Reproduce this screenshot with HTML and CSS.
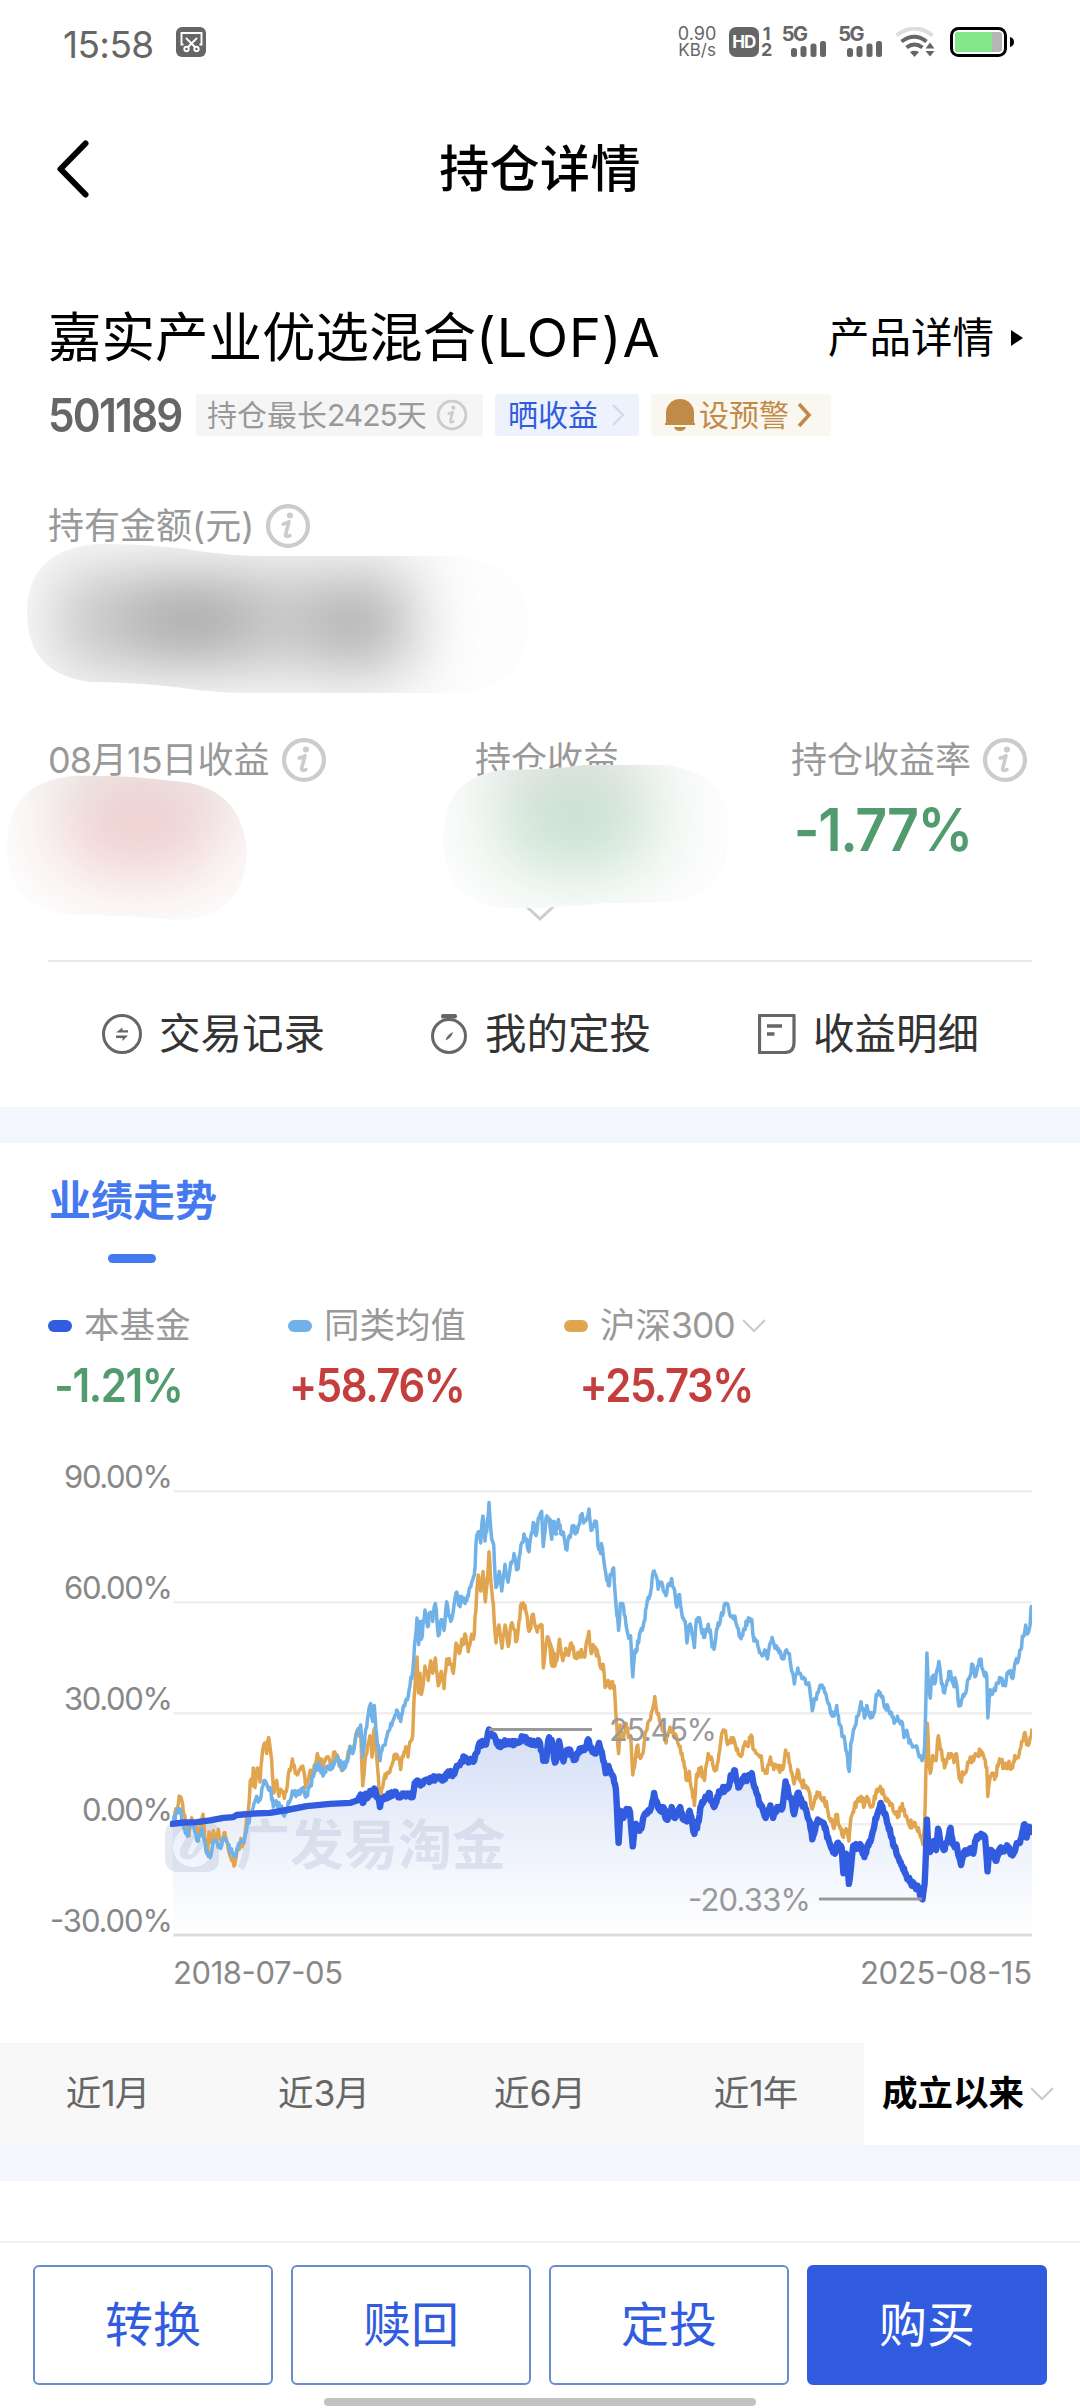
FILE: index.html
```html
<!DOCTYPE html>
<html lang="zh-CN">
<head>
<meta charset="UTF-8">
<meta name="viewport" content="width=device-width, initial-scale=1.0">
<title>持仓详情</title>
<link rel="stylesheet" href="styles.css">
</head>
<body>
<svg width="0" height="0" class="defs">
    <symbol id="info" viewBox="0 0 48 48">
        <circle cx="24" cy="24" r="20.8" fill="none" stroke="currentColor" stroke-width="4.400"/>
        <circle cx="26" cy="13" r="3.200" fill="currentColor"/>
        <path d="M19 22q4-1 6-2.500l-3.500 13.500q-.5 3 4.500 1" fill="none" stroke="currentColor" stroke-width="3.800" stroke-linejoin="round" stroke-linecap="round"/>
    </symbol>
    <symbol id="signal" viewBox="0 0 36 16">
        <rect x="0" y="7" width="6" height="9" rx="2.500"/>
        <rect x="9.500" y="5" width="6" height="11" rx="2.500"/>
        <rect x="19.500" y="2.500" width="6" height="13.500" rx="2.500"/>
        <rect x="29" y="0" width="6" height="16" rx="2.500"/>
    </symbol>
</svg>
<div class="main">
    <div class="status">
        <span class="time">15:58</span>
        <svg class="cut" width="30" height="30" viewBox="0 0 30 30">
            <rect width="30" height="30" rx="6" fill="#666"/>
            <g fill="none" stroke="#fff" stroke-width="1.900">
                <path d="M7.500 17.500H5.500V6h20v11.500h-2"/>
                <path d="M10.500 11.500l8.500 8.500M20.500 11.500L12 20" stroke-linecap="round"/>
                <circle cx="10.500" cy="22" r="2.200"/>
                <circle cx="20.500" cy="22" r="2.200"/>
            </g>
        </svg>
        <div class="speed"><span>0.90</span><span>KB/s</span></div>
        <div class="hd">HD</div>
        <div class="sims"><span>1</span><span>2</span></div>
        <div class="cell"><span>5G</span><svg width="36" height="16"><use href="#signal"/></svg></div>
        <div class="cell"><span>5G</span><svg width="36" height="16"><use href="#signal"/></svg></div>
        <svg class="wifi" width="40" height="30" viewBox="0 0 40 30">
            <g fill="none" stroke="#666" stroke-width="4">
                <path d="M1.500 8.500Q19.500-5.500 37.500 8.500" stroke="#ddd"/>
                <path d="M6.500 14.500q13-9.500 25 0"/>
                <path d="M11.500 20.500q8-6 16 0" />
            </g>
            <path d="M15 25q4.500-2.500 9 0l-4.500 5z" fill="#666"/>
            <path d="M30.500 21.500l4.500-6 4.500 6zM30.500 24h9l-4.500 5.500z" fill="#666"/>
        </svg>
        <svg width="66" height="30" viewBox="0 0 66 30">
            <rect x="1.500" y="1.500" width="54" height="27" rx="7" fill="#fff" stroke="#000" stroke-width="3"/>
            <rect x="5" y="5" width="47" height="20" rx="3" fill="#b5b5b5"/>
            <path d="M8 5h34v20H8q-3 0-3-3V8q0-3 3-3z" fill="#84e88b"/>
            <path d="M60 10q4 1 4 5t-4 5z"/>
        </svg>
    </div>

    <header class="nav">
        <svg width="34" height="60" viewBox="0 0 34 60"><path d="M29.500 4.500L4.500 30l25 25.500" fill="none" stroke="#000" stroke-width="6" stroke-linecap="round" stroke-linejoin="round"/></svg>
        <h1>持仓详情</h1>
    </header>

    <section class="fund">
        <div class="fund_title">
            <h2>嘉实产业优选混合<span>(LOF)A</span></h2>
            <a class="detail">产品详情<svg width="12" height="16" viewBox="0 0 12 16"><path d="M0 0l12 8-12 8z"/></svg></a>
        </div>
        <div class="tags">
            <div class="code"><span>501189</span></div>
            <span class="tag tag_days">持仓最长<i>2425</i>天<svg width="32" height="32"><use href="#info"/></svg></span>
            <span class="tag tag_share">晒收益<svg width="14" height="24" viewBox="0 0 14 24"><path d="M2 2l10 10L2 22" fill="none" stroke="#d0d7e6" stroke-width="2"/></svg></span>
            <span class="tag tag_alert"><svg width="30" height="34" viewBox="0 0 30 34"><path d="M1 26V15a14 14 0 0 1 28 0v11z"/><path d="M0 25h30v2H0zM9 29h12q-1 4-6 4t-6-4z"/></svg>设预警<svg class="go" width="15" height="26" viewBox="0 0 15 26"><path d="M2 2l10 11L2 24" fill="none" stroke="#bf8b46" stroke-width="3.600"/></svg></span>
        </div>

        <div class="label amount">持有金额(元)<svg width="46" height="46"><use href="#info"/></svg></div>

        <div class="profits">
            <div class="profit">
                <div class="label"><i>08</i>月<i>15</i>日收益<svg width="46" height="46"><use href="#info"/></svg></div>
            </div>
            <div class="profit">
                <div class="label">持仓收益</div>
            </div>
            <div class="profit">
                <div class="label">持仓收益率<svg width="46" height="46"><use href="#info"/></svg></div>
                <div class="rate">-1.77%</div>
            </div>
        </div>
        <div class="more"><svg width="32" height="17" viewBox="0 0 32 17"><path d="M2 1l14 13L30 1" fill="none" stroke="#ccc" stroke-width="3"/></svg></div>

        <!-- smudges that hide the private amounts -->
        <svg class="smudge" width="760" height="400" viewBox="0 530 760 400">
            <defs>
                <filter id="soft" x="-50%" y="-80%" width="200%" height="260%"><feGaussianBlur stdDeviation="32"/></filter>
                <filter id="softer" x="-80%" y="-120%" width="260%" height="340%"><feGaussianBlur stdDeviation="34"/></filter>
                <clipPath id="c1"><path d="M95 544q58-1 110 8 30 4 60 4H450q78 6 78 68 0 69-78 69H250q-35 0-75-6-45-5-85-5-63-8-63-69 0-62 68-69z"/></clipPath>
                <clipPath id="c2"><path d="M72 776q58-1 100 5 68 3 75 68 0 70-72 71-50-5-100-5-68-4-68-69 0-64 65-70z"/></clipPath>
                <clipPath id="c3"><path d="M505 770q45 0 80-5h78q66 5 66 69 0 63-66 69h-60q-45 6-98 5-62-4-62-69 0-64 62-69z"/></clipPath>
            </defs>
            <g clip-path="url(#c1)">
                <rect y="530" width="560" height="180" fill="#fdfdfd"/>
                <g filter="url(#soft)"><rect x="50" y="565" width="365" height="110" fill="#cbcbcb"/><ellipse cx="190" cy="620" rx="70" ry="32" fill="#a2a2a2"/><ellipse cx="355" cy="626" rx="46" ry="30" fill="#a6a6a6"/></g>
            </g>
            <g clip-path="url(#c2)">
                <rect y="750" width="300" height="180" fill="#fdfcfc"/>
                <g filter="url(#softer)"><rect x="50" y="740" width="210" height="50" fill="#e4e0e0"/><ellipse cx="140" cy="830" rx="90" ry="48" fill="#f0cfcf"/></g>
            </g>
            <g clip-path="url(#c3)">
                <rect x="430" y="750" width="310" height="180" fill="#fcfdfc"/>
                <g filter="url(#softer)"><rect x="490" y="730" width="160" height="54" fill="#dcdfdd"/><ellipse cx="575" cy="826" rx="86" ry="50" fill="#cae2d1"/></g>
            </g>
        </svg>

        <div class="actions">
            <a class="action">
                <svg width="40" height="40" viewBox="0 0 40 40"><circle cx="20" cy="20" r="18.500" fill="none" stroke="#666" stroke-width="3"/><path d="M14 18.500l6.500-5v2.700H26v2.300zM26 21.500l-5.500 5.500v-3H14v-2.500z" fill="#666"/></svg>交易记录
            </a>
            <a class="action">
                <svg width="38" height="40" viewBox="0 0 38 40"><circle cx="19" cy="22" r="16.500" fill="none" stroke="#666" stroke-width="3"/><rect x="11" y="0" width="16" height="4.500" rx="2" fill="#666"/><path d="M23 18q-1.500 6-7.500 8.500Q17 20.500 23 18z" fill="#666"/></svg>我的定投
            </a>
            <a class="action">
                <svg width="38" height="40" viewBox="0 0 38 40"><path d="M1.500 1.500h34.500V29q0 9.500-9.500 9.500H1.500z" fill="none" stroke="#666" stroke-width="3.200" stroke-linejoin="round"/><path d="M9 12h15M9 20h7.500" stroke="#666" stroke-width="3.600"/></svg>收益明细
            </a>
        </div>
    </section>

    <section class="trend">
        <h3>业绩走势</h3>
        <div class="legend">
            <div class="item">
                <div class="name"><b class="dot dot_fund"></b>本基金</div>
                <div class="value down">-1.21%</div>
            </div>
            <div class="item">
                <div class="name"><b class="dot dot_avg"></b>同类均值</div>
                <div class="value">+58.76%</div>
            </div>
            <div class="item">
                <div class="name"><b class="dot dot_index"></b>沪深<i>300</i><svg width="24" height="14" viewBox="0 0 24 14"><path d="M1 1l11 11L23 1" fill="none" stroke="#c8c8d8" stroke-width="2"/></svg></div>
                <div class="value">+25.73%</div>
            </div>
        </div>

        <svg class="chart" width="1080" height="560" viewBox="0 0 1080 560">
            <defs>
                <linearGradient id="fade" gradientUnits="userSpaceOnUse" x1="0" y1="280" x2="0" y2="485">
                    <stop offset="0" stop-color="#d4def5"/>
                    <stop offset=".5" stop-color="#ebf0fb"/>
                    <stop offset="1" stop-color="#fff"/>
                </linearGradient>
                <clipPath id="plot"><rect x="170" y="30" width="862" height="460"/></clipPath>
            </defs>
            <path id="area" fill="url(#fade)" clip-path="url(#plot)"/>
            <g class="grid">
                <path d="M173.500 41.200H1032M173.500 152.200H1032M173.500 263.200H1032M173.500 374.200H1032"/>
                <path class="axis" d="M173.500 485H1032"/>
            </g>
            <g class="mark">
                <path fill-rule="evenodd" d="M179 371h26q14 0 14 14v23q0 14-14 14h-26q-14 0-14-14v-23q0-14 14-14zM193 377a20 20 0 1 0 .1 0z"/>
                <path d="M188 384h8l-8 18q0 4 4 2l8-14h10l-2 4h-4q-8 17-19 15-9-2-3-14z"/>
                <text x="236" y="415" textLength="270">广发易淘金</text>
            </g>
            <g clip-path="url(#plot)" fill="none" stroke-linejoin="round">
                <path id="index" stroke="#e1a54f" stroke-width="3.500"/>
                <path id="avg" stroke="#70b1e8" stroke-width="3.500"/>
                <path id="fund" stroke="#315ce0" stroke-width="6.400" stroke-linecap="round"/>
            </g>
            <g class="ticks">
                <text x="64" y="38" textLength="109">90.00%</text>
                <text x="64" y="149" textLength="109">60.00%</text>
                <text x="64" y="260" textLength="109">30.00%</text>
                <text x="82" y="371" textLength="91">0.00%</text>
                <text x="50" y="482" textLength="123">-30.00%</text>
                <text x="173" y="534" textLength="170">2018-07-05</text>
                <text x="860" y="534" textLength="172">2025-08-15</text>
            </g>
            <g class="peaks">
                <path d="M489 279.600H592M819 449H922"/>
                <text x="609" y="291" textLength="108">25.45%</text>
                <text x="688" y="461" textLength="123">-20.33%</text>
            </g>
        </svg>

        <div class="tabs">
            <span>近<i>1</i>月</span>
            <span>近<i>3</i>月</span>
            <span>近<i>6</i>月</span>
            <span>近<i>1</i>年</span>
            <span class="active">成立以来<svg width="24" height="14" viewBox="0 0 24 14"><path d="M1 1l11 11L23 1" fill="none" stroke="#c8c8d8" stroke-width="2"/></svg></span>
        </div>
    </section>

    <footer class="bar">
        <div class="buttons">
            <button>转换</button>
            <button>赎回</button>
            <button>定投</button>
            <button class="buy">购买</button>
        </div>
        <div class="home"></div>
    </footer>
</div>
<script src="chart.js"></script>
</body>
</html>
```
FILE: styles.css
```css
* {
    margin: 0;
    padding: 0;
    box-sizing: border-box;
}

body {
    width: 1080px;
    background: #fff;
    font-family: Inter, "Noto Sans CJK SC", sans-serif;
    color: #000;
}

i {
    font-style: normal;
    letter-spacing: -1px;
}

svg {
    display: block;
    flex: none;
}

.defs {
    position: absolute;
}

.main {
    height: 2408px;
    display: flex;
    flex-direction: column;
    overflow: hidden;
}

/* status bar */
.status {
    height: 84px;
    padding: 0 64px 0 63px;
    display: flex;
    align-items: center;
    color: #666;
}

.time {
    width: 114px;
    font-size: 37px;
    letter-spacing: -0.6px;
    padding-top: 4px;
}

.speed {
    width: 40px;
    margin-left: 471px;
    font-size: 17px;
    line-height: 17px;
    display: flex;
    flex-direction: column;
    align-items: center;
}

.speed span:first-child {
    font-size: 18px;
}

.hd {
    width: 30px;
    height: 30px;
    margin-left: 12px;
    border-radius: 7px;
    background: #666;
    color: #fff;
    font-size: 17px;
    font-weight: 700;
    line-height: 31px;
    text-align: center;
    letter-spacing: -1px;
}

.sims {
    width: 14px;
    margin-left: 1px;
    font-size: 18px;
    font-weight: 700;
    line-height: 16px;
    display: flex;
    flex-direction: column;
    align-items: center;
}

.cell {
    width: 46px;
    height: 30px;
    margin-left: 8px;
    display: flex;
    flex-direction: column;
}

.cell + .cell {
    margin-left: 11px;
}

.cell span {
    height: 14px;
    font-size: 20px;
    font-weight: 700;
    line-height: 14px;
    letter-spacing: -1.5px;
}

.cell svg {
    margin-left: 9px;
    fill: #666;
}

.wifi {
    margin: 0 15px 0 11px;
}

/* top navigation */
.nav {
    height: 170px;
    display: grid;
    grid-template-columns: 1fr auto 1fr;
    align-items: center;
    padding: 0 56px;
}

.nav h1 {
    font-size: 50px;
    font-weight: 500;
    line-height: 60px;
    letter-spacing: 0.4px;
}

/* fund summary */
.fund {
    position: relative;
    height: 853px;
    padding: 50px 48px 0;
}

.fund_title {
    height: 68px;
    display: flex;
    align-items: center;
    justify-content: space-between;
}

.fund_title h2 {
    font-size: 53.500px;
    font-weight: 400;
    line-height: 68px;
}

.fund_title h2 span {
    font-size: 54px;
    letter-spacing: 1px;
}

.detail {
    font-size: 41.500px;
    line-height: 68px;
    padding-right: 9px;
    display: flex;
    align-items: center;
    gap: 17px;
}

.tags {
    margin-top: 22px;
    height: 42px;
    display: flex;
    align-items: center;
}

.code {
    width: 148px;
    color: #666;
    font-size: 47px;
    font-weight: 600;
    line-height: 42px;
    letter-spacing: -2px;
}

.code span {
    display: inline-block;
    transform: scaleX(0.9);
    transform-origin: left;
}

.tag {
    height: 42px;
    margin-right: 12px;
    border-radius: 3px;
    display: flex;
    align-items: center;
    font-size: 30px;
    line-height: 42px;
    white-space: nowrap;
}

.tag_days {
    width: 287px;
    padding-left: 11px;
    background: #f5f5f5;
    color: #999;
}

.tag_days svg {
    margin-left: 9px;
    color: #ccc;
}

.tag_share {
    width: 144px;
    padding-left: 13px;
    background: #edf2fc;
    color: #315ce0;
}

.tag_share svg {
    margin-left: 13px;
}

.tag_alert {
    width: 180px;
    padding-left: 14px;
    background: #faf6f0;
    color: #bf8b46;
}

.tag_alert svg {
    margin-right: 4px;
    fill: #bf8b46;
}

.tag_alert .go {
    margin: 0 0 0 8px;
}

.label {
    height: 46px;
    display: flex;
    align-items: center;
    color: #999;
    font-size: 36px;
    line-height: 46px;
}

.label svg {
    margin-left: 11px;
    color: #ccc;
}

.amount {
    margin-top: 67px;
}

.profits {
    margin-top: 188px;
    height: 148px;
    display: grid;
    grid-template-columns: 427px 316px auto;
}

.rate {
    margin-top: 12px;
    padding-left: 3px;
    color: #519b6e;
    font-size: 59px;
    font-weight: 600;
    line-height: 70px;
    letter-spacing: -1.500px;
    transform: scaleX(0.94);
    transform-origin: left;
}

.more {
    height: 74px;
    padding-top: 35px;
    display: flex;
    justify-content: center;
    margin-top: -15px;
}

.smudge {
    position: absolute;
    left: 0;
    top: 276px;
}

.actions {
    height: 145px;
    margin-top: 16px;
    border-top: 2px solid #e8e8e8;
    display: grid;
    grid-template-columns: repeat(3, 328px);
}

.action {
    display: flex;
    align-items: center;
    gap: 17px;
    padding-left: 54px;
    color: #333;
    font-size: 41.500px;
    line-height: 50px;
}

/* performance */
.trend {
    height: 1074px;
    border-top: 36px solid #f3f6fc;
    border-bottom: 36px solid #f3f6fc;
}

.trend h3 {
    height: 120px;
    padding: 33px 0 0 49px;
    color: #4579f0;
    font-size: 42px;
    font-weight: 700;
    line-height: 50px;
}

.trend h3::after {
    content: "";
    display: block;
    width: 48px;
    height: 9px;
    margin: 28px 0 0 59px;
    border-radius: 5px;
    background: #4579f0;
}

.legend {
    height: 187px;
    padding: 38px 0 0 48px;
    display: grid;
    grid-template-columns: 240px 276px auto;
}

.name {
    height: 50px;
    display: flex;
    align-items: center;
    color: #999;
    font-size: 35.500px;
    line-height: 50px;
}

.name svg {
    margin-left: 7px;
}

.dot {
    width: 24px;
    height: 12px;
    margin-right: 12px;
    border-radius: 6px;
}

.dot_fund {
    background: #315ce0;
}

.dot_avg {
    background: #70b1e8;
}

.dot_index {
    background: #e1a54f;
}

.value {
    margin-top: 6px;
    padding-left: 1px;
    color: #c43e3e;
    font-size: 46px;
    font-weight: 600;
    line-height: 56px;
    letter-spacing: -1.500px;
    transform: scaleX(0.91);
    transform-origin: left;
}

.item:first-child .value {
    padding-left: 7px;
}

.item:last-child .value {
    padding-left: 17px;
}

.value.down {
    color: #519b6e;
}

.grid path {
    stroke: #efefef;
    stroke-width: 2.500;
}

.grid .axis {
    stroke: #dedede;
    stroke-width: 3;
}

.mark {
    fill: #9aa5c4;
    opacity: 0.24;
    font-size: 54px;
    font-weight: 700;
}

.ticks {
    fill: #888;
    font-size: 31px;
}

.peaks {
    fill: #999;
    font-size: 31px;
}

.peaks path {
    stroke: #999;
    stroke-width: 3;
}

.tabs {
    margin-top: 33px;
    height: 102px;
    display: grid;
    grid-template-columns: repeat(5, 216px);
    background: #f8f8f8;
    color: #666;
    font-size: 35.500px;
    line-height: 102px;
    text-align: center;
}

.tabs .active {
    display: flex;
    align-items: center;
    padding-left: 18px;
    background: #fff;
    color: #000;
    font-weight: 700;
}

.tabs svg {
    margin-left: 6px;
}

/* bottom buttons */
.bar {
    margin-top: 60px;
    border-top: 2px solid #f2f2f2;
    padding: 22px 33px 0;
}

.buttons {
    display: grid;
    grid-template-columns: repeat(4, 240px);
    column-gap: 18px;
}

.buttons button {
    height: 120px;
    border: 2px solid #6a8ccb;
    border-radius: 6px;
    background: #fff;
    color: #315ce0;
    font-family: inherit;
    font-size: 48px;
    line-height: 60px;
}

.buttons .buy {
    border-color: #315ce0;
    background: #315ce0;
    color: #fff;
}

.home {
    width: 432px;
    height: 8px;
    margin: 13px auto 0;
    border-radius: 4px;
    background: #c2c2c2;
}
```
FILE: chart.js
```javascript
// each series is stored in two halves, [x, y] pairs in the units of that half
const halves = [
  { x: 40, kx: 3, ky: 2.8 },
  { x: 550, kx: 2.958, ky: 2.8 },
];

const series = {
  avg: [
    "400,1045 410,1015 420,1005 428,1040 435,1068 445,1075 452,1040 462,1060 475,1095 485,1060 495,1100 505,1138 514,1130 522,1095 532,1100 545,1108 553,1085 562,1100 572,1125 582,1138 590,1120 602,1100 612,1098 622,1050 632,1020 642,990 650,970 660,980 672,925 682,940 690,945 700,1000 712,990 722,1000 733,1025 745,985 757,955 768,970 778,965 790,945 797,972 808,945 820,915 830,880 840,890 852,905 862,890 872,895 885,870 897,872 910,890 920,870 930,830 938,850 948,800 962,770 968,860 975,800 985,740 992,710 998,760 1003,715 1010,800 1020,870 1028,830 1038,810 1050,780 1060,755 1070,728 1082,760 1092,715 1102,700 1110,660 1118,620 1124,540 1131,470 1136,545 1140,480 1144,530 1155,448 1163,495 1170,455 1178,480 1186,430 1195,520 1204,475 1212,505 1220,425 1232,480 1240,450 1248,400 1258,435 1265,410 1275,430 1285,410 1295,370 1303,350 1310,240 1318,230 1322,260 1329,185 1335,255 1340,230 1347,147 1355,250 1361,265 1368,385 1378,340 1385,395 1395,320 1404,370 1412,315 1422,290 1432,335 1440,290 1452,235 1460,250 1467,285 1475,230 1482,205 1488,240 1495,190 1505,172 1510,270 1518,190 1526,190 1535,250 1542,200 1550,235",
    "0,195 5,250 10,200 17,235 25,195 32,235 42,245 50,280 57,240 68,215 75,235 85,210 95,178 102,200 108,195 115,165 122,225 130,215 137,200 142,270 150,290 152,262 158,300 165,345 173,380 180,350 188,330 195,430 203,505 208,430 215,430 222,465 230,515 238,520 245,635 252,560 262,540 270,500 278,480 285,440 295,410 300,385 306,340 313,350 320,390 330,370 343,408 350,375 360,360 368,390 375,440 383,405 392,470 400,480 405,540 412,490 420,515 427,553 433,475 445,485 455,525 468,488 477,530 485,558 495,500 505,470 518,430 528,440 537,465 547,465 557,500 565,528 575,500 587,470 597,475 603,535 615,550 625,570 635,560 643,585 650,545 657,525 665,555 675,555 687,585 697,562 708,570 715,620 723,655 733,610 745,640 757,655 768,665 776,730 785,695 793,680 802,662 815,680 825,710 835,745 843,740 848,715 858,770 867,800 875,840 880,860 885,900 890,820 900,780 910,745 920,705 930,750 937,715 948,750 957,740 965,685 977,680 987,710 1000,720 1010,735 1018,765 1030,755 1040,760 1047,805 1055,785 1062,820 1075,830 1085,830 1095,855 1103,865 1108,830 1112,700 1115,568 1119,660 1125,695 1130,635 1140,650 1150,592 1158,655 1167,680 1175,645 1185,620 1193,655 1200,645 1207,700 1215,715 1222,685 1232,670 1240,640 1250,600 1257,635 1265,605 1275,585 1283,625 1292,635 1295,750 1300,680 1310,680 1320,655 1332,645 1345,655 1357,620 1368,640 1375,600 1385,590 1392,560 1400,520 1407,490 1412,515 1420,490 1423,440 1426,435",
  ],
  index: [
    "400,1045 405,1015 413,1000 420,972 430,1010 437,1045 447,1080 455,1030 465,1060 478,1070 489,1020 497,1100 503,1130 507,1070 515,1100 520,1065 530,1090 535,1062 545,1100 552,1072 562,1100 572,1140 582,1165 590,1130 600,1100 612,1100 620,1030 628,980 631,925 637,940 640,890 645,945 652,890 660,930 668,840 675,820 680,850 686,805 695,870 702,960 710,925 717,970 725,955 733,975 742,940 748,895 757,865 766,905 775,905 788,885 797,945 808,910 820,905 832,850 842,870 850,890 860,860 872,885 884,845 895,870 910,895 920,875 930,830 938,840 948,795 962,790 968,940 975,870 985,820 990,800 996,860 1003,780 1010,860 1018,960 1023,965 1030,935 1040,905 1052,890 1062,855 1072,855 1082,895 1092,845 1100,835 1104,860 1112,815 1118,800 1122,700 1127,620 1131,580 1136,680 1140,625 1144,685 1155,605 1165,645 1172,590 1178,625 1186,582 1195,660 1204,620 1212,668 1220,585 1230,600 1240,625 1248,540 1258,570 1265,530 1270,545 1275,515 1285,565 1292,530 1303,515 1310,400 1315,350 1322,395 1329,340 1336,425 1342,370 1347,285 1355,390 1360,430 1368,540 1377,490 1386,555 1395,490 1405,550 1413,490 1420,500 1430,535 1437,480 1444,430 1450,428 1460,460 1467,508 1480,460 1492,510 1500,490 1506,490 1510,610 1517,550 1525,525 1536,605 1548,590",
    "0,540 6,605 13,570 20,590 28,530 38,590 47,555 55,575 63,540 75,580 85,575 95,570 103,580 115,508 122,570 130,550 142,575 150,610 157,600 163,665 172,645 180,660 190,660 195,740 203,850 208,770 217,810 225,765 232,805 238,800 245,910 252,870 257,830 265,855 275,850 282,790 292,760 300,735 310,690 318,740 327,765 335,780 343,820 350,790 360,785 368,800 378,820 385,830 393,870 405,925 412,900 420,950 427,995 433,910 445,890 457,925 468,850 477,860 485,895 495,880 502,840 508,795 516,785 525,825 537,805 548,825 557,850 565,858 575,825 585,830 595,798 603,840 612,850 622,860 632,895 642,905 652,860 662,895 672,885 688,895 697,840 705,850 713,900 722,935 733,895 742,930 757,940 768,960 776,1005 785,970 795,960 808,975 820,1000 830,1040 840,1060 848,1020 858,1060 868,1085 876,1060 884,1095 890,1030 900,1000 912,975 920,970 930,995 937,970 948,1000 957,990 965,955 977,942 987,965 1000,985 1010,990 1018,1015 1030,1020 1042,990 1050,1025 1060,1045 1073,1050 1085,1060 1095,1080 1103,1105 1108,1050 1112,900 1116,765 1120,850 1125,905 1132,855 1142,870 1149,800 1158,840 1167,890 1177,860 1187,850 1195,875 1202,850 1208,900 1215,928 1222,905 1233,895 1243,860 1253,870 1263,855 1275,842 1285,865 1292,890 1295,970 1302,915 1318,910 1330,865 1342,885 1355,880 1368,890 1375,855 1388,850 1400,810 1407,800 1412,825 1420,805 1426,780",
  ],
  fund: [
    "397,1047 430,1043 470,1042 510,1037 550,1030 580,1028 590,1022 640,1018 690,1016 740,1008 800,997 870,991 930,988 955,980 962,965 968,988 975,970 985,965 1003,948 1012,970 1020,1000 1028,975 1040,972 1062,960 1075,972 1090,965 1100,968 1118,972 1124,932 1150,932 1165,925 1190,918 1215,922 1222,905 1240,905 1250,885 1262,875 1273,860 1285,875 1303,868 1315,830 1328,815 1338,825 1347,783 1355,800 1365,805 1370,822 1385,828 1400,818 1412,822 1440,815 1450,803 1465,815 1478,818 1500,820 1510,870 1518,870 1525,812 1535,812 1545,875 1552,850",
    "0,815 5,820 15,875 27,815 40,872 50,840 60,840 70,868 80,850 92,835 102,840 113,810 125,845 133,850 145,820 155,855 165,905 173,885 185,910 195,950 203,1100 208,1010 217,1030 226,1005 237,1015 245,1110 252,1050 262,1060 270,1060 280,1020 290,1010 300,1000 308,960 318,990 325,1010 335,1000 345,1035 360,1000 370,1030 385,1000 395,1035 405,1040 413,1010 427,1075 440,1040 445,1000 457,980 470,960 485,1000 495,970 507,955 525,945 537,910 547,897 557,945 570,920 585,920 597,905 605,945 617,980 630,1010 638,1030 652,995 660,1030 672,1000 688,1000 697,928 705,960 713,975 722,1020 733,960 745,990 757,1005 768,1040 776,1090 787,1045 798,1040 810,1045 820,1085 832,1115 843,1130 850,1100 863,1115 868,1185 876,1130 884,1215 892,1150 897,1108 910,1110 920,1108 930,1140 940,1105 952,1080 960,1050 968,1020 978,988 990,1020 1000,1050 1010,1085 1020,1110 1030,1140 1042,1165 1052,1185 1065,1210 1080,1220 1090,1230 1102,1258 1108,1215 1112,1130 1115,1035 1119,1120 1127,1120 1135,1095 1142,1120 1148,1060 1155,1100 1165,1120 1175,1100 1185,1058 1192,1105 1203,1105 1210,1140 1216,1162 1225,1125 1235,1130 1243,1115 1252,1130 1260,1090 1275,1075 1287,1085 1294,1180 1300,1120 1310,1125 1318,1150 1328,1120 1342,1118 1357,1112 1368,1135 1378,1110 1390,1100 1397,1070 1404,1048 1410,1085 1417,1055 1426,1070",
  ],
};

let seed = 7;
function random() {
  seed = (seed * 16807) % 2147483647;
  return seed / 2147483647 - 0.5;
}

function toPoints(parts) {
  return parts.flatMap((part, i) => {
    const half = halves[i];
    return part.split(" ").map((pair) => {
      const [x, y] = pair.split(",").map(Number);
      return [half.x + x / half.kx, y / half.ky];
    });
  });
}

// daily wobble between two neighbouring readings
function wobble(points, size, from) {
  const out = [points[0]];
  for (let i = 1; i < points.length; i++) {
    const [x0, y0] = points[i - 1];
    const [x1, y1] = points[i];
    const steps = x0 < from ? 1 : Math.max(1, Math.round((x1 - x0) / 0.9));
    for (let s = 1; s <= steps; s++) {
      const t = s / steps;
      const shift = s < steps ? random() * size : 0;
      out.push([x0 + (x1 - x0) * t, y0 + (y1 - y0) * t + shift]);
    }
  }
  return out;
}

function toPath(points) {
  return "M" + points.map(([x, y]) => x.toFixed(1) + " " + y.toFixed(1)).join("L");
}

const lines = {
  avg: wobble(toPoints(series.avg), 9, 0),
  index: wobble(toPoints(series.index), 9, 0),
  fund: wobble(toPoints(series.fund), 6, 355),
};

Object.keys(lines).forEach((id) => {
  document.getElementById(id).setAttribute("d", toPath(lines[id]));
});
document.getElementById("area").setAttribute("d", toPath(lines.fund) + "L1032 485L173.5 485Z");
```
